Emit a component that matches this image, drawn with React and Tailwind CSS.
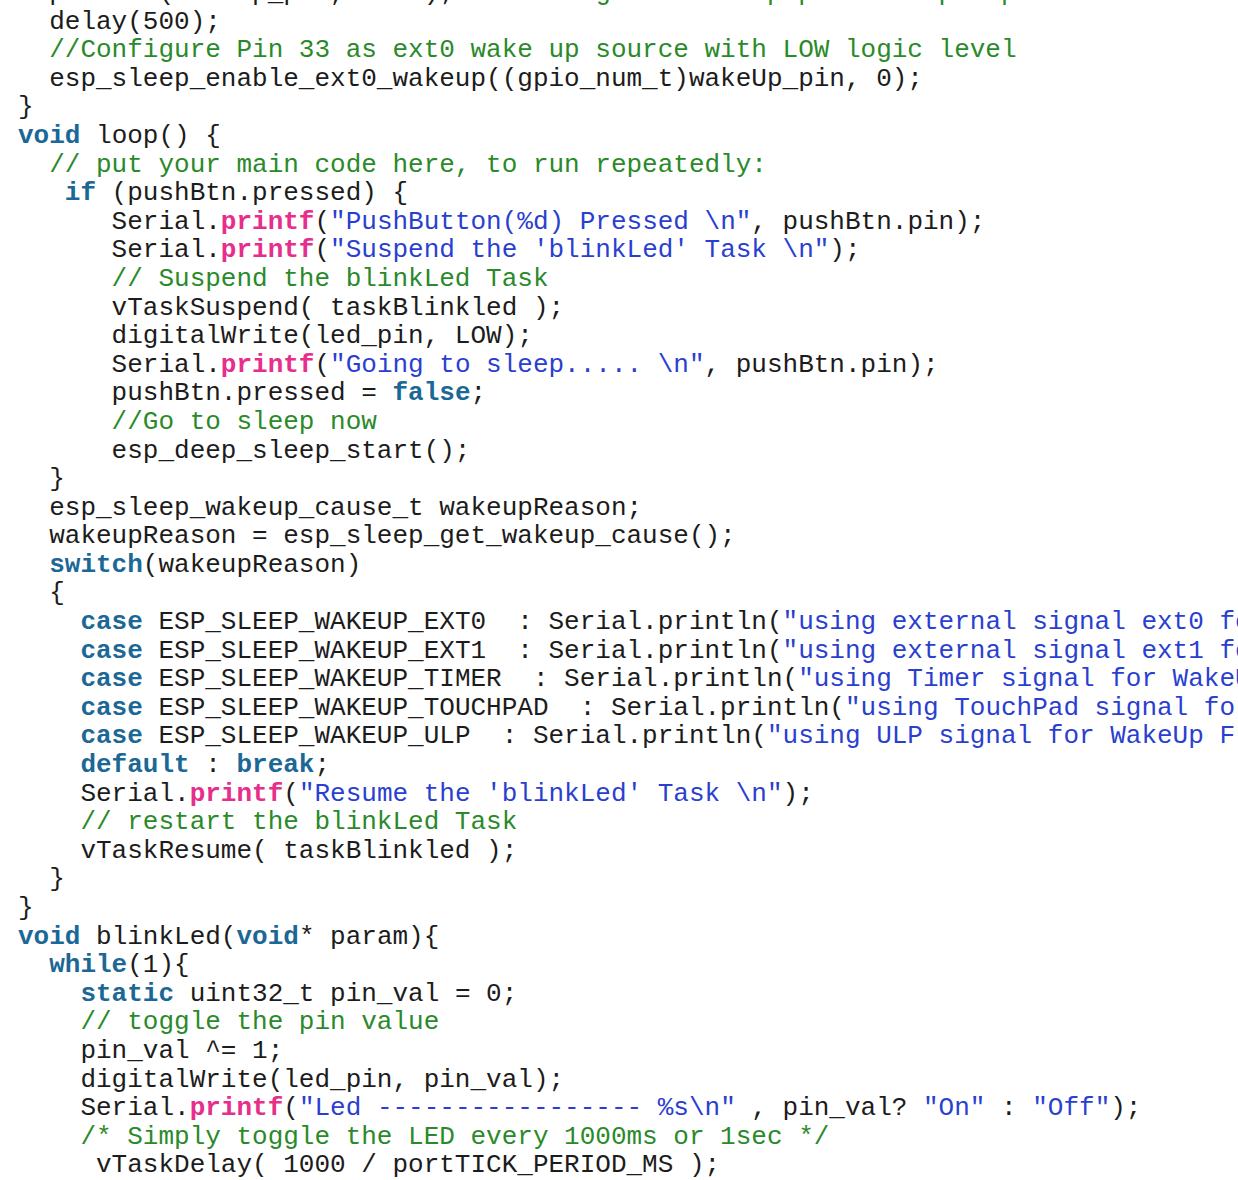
import React from "react";

const colors = {
  t: "text-[#1c1c1c]",
  k: "text-[#1b6896] font-bold",
  p: "text-[#e62e8b] font-bold",
  s: "text-[#2a3fd0]",
  c: "text-[#2a8a2a]",
};

// each line: list of [kind, text]
const lines = [
  [["t", "  pinMode(wakeUp_pin,INPUT); "], ["c", "// Configure wake up pin as input pin"]],
  [["t", "  delay(500);"]],
  [["c", "  //Configure Pin 33 as ext0 wake up source with LOW logic level"]],
  [["t", "  esp_sleep_enable_ext0_wakeup((gpio_num_t)wakeUp_pin, 0);"]],
  [["t", "}"]],
  [["k", "void"], ["t", " loop() {"]],
  [["c", "  // put your main code here, to run repeatedly:"]],
  [["k", "   if"], ["t", " (pushBtn.pressed) {"]],
  [["t", "      Serial."], ["p", "printf"], ["t", "("], ["s", "\"PushButton(%d) Pressed \\n\""], ["t", ", pushBtn.pin);"]],
  [["t", "      Serial."], ["p", "printf"], ["t", "("], ["s", "\"Suspend the 'blinkLed' Task \\n\""], ["t", ");"]],
  [["c", "      // Suspend the blinkLed Task"]],
  [["t", "      vTaskSuspend( taskBlinkled );"]],
  [["t", "      digitalWrite(led_pin, LOW);"]],
  [["t", "      Serial."], ["p", "printf"], ["t", "("], ["s", "\"Going to sleep..... \\n\""], ["t", ", pushBtn.pin);"]],
  [["t", "      pushBtn.pressed = "], ["k", "false"], ["t", ";"]],
  [["c", "      //Go to sleep now"]],
  [["t", "      esp_deep_sleep_start();"]],
  [["t", "  }"]],
  [["t", "  esp_sleep_wakeup_cause_t wakeupReason;"]],
  [["t", "  wakeupReason = esp_sleep_get_wakeup_cause();"]],
  [["k", "  switch"], ["t", "(wakeupReason)"]],
  [["t", "  {"]],
  [["k", "    case"], ["t", " ESP_SLEEP_WAKEUP_EXT0  : Serial.println("], ["s", "\"using external signal ext0 for WakeUp From sleep\""], ["t", "); "], ["k", "break"], ["t", ";"]],
  [["k", "    case"], ["t", " ESP_SLEEP_WAKEUP_EXT1  : Serial.println("], ["s", "\"using external signal ext1 for WakeUp From sleep\""], ["t", "); "], ["k", "break"], ["t", ";"]],
  [["k", "    case"], ["t", " ESP_SLEEP_WAKEUP_TIMER  : Serial.println("], ["s", "\"using Timer signal for WakeUp From sleep\""], ["t", "); "], ["k", "break"], ["t", ";"]],
  [["k", "    case"], ["t", " ESP_SLEEP_WAKEUP_TOUCHPAD  : Serial.println("], ["s", "\"using TouchPad signal for WakeUp From sleep\""], ["t", "); "], ["k", "break"], ["t", ";"]],
  [["k", "    case"], ["t", " ESP_SLEEP_WAKEUP_ULP  : Serial.println("], ["s", "\"using ULP signal for WakeUp From sleep\""], ["t", "); "], ["k", "break"], ["t", ";"]],
  [["k", "    default"], ["t", " : "], ["k", "break"], ["t", ";"]],
  [["t", "    Serial."], ["p", "printf"], ["t", "("], ["s", "\"Resume the 'blinkLed' Task \\n\""], ["t", ");"]],
  [["c", "    // restart the blinkLed Task"]],
  [["t", "    vTaskResume( taskBlinkled );"]],
  [["t", "  }"]],
  [["t", "}"]],
  [["k", "void"], ["t", " blinkLed("], ["k", "void"], ["t", "* param){"]],
  [["k", "  while"], ["t", "(1){"]],
  [["k", "    static"], ["t", " uint32_t pin_val = 0;"]],
  [["c", "    // toggle the pin value"]],
  [["t", "    pin_val ^= 1;"]],
  [["t", "    digitalWrite(led_pin, pin_val);"]],
  [["t", "    Serial."], ["p", "printf"], ["t", "("], ["s", "\"Led ----------------- %s\\n\""], ["t", " , pin_val? "], ["s", "\"On\""], ["t", " : "], ["s", "\"Off\""], ["t", ");"]],
  [["c", "    /* Simply toggle the LED every 1000ms or 1sec */"]],
  [["t", "     vTaskDelay( 1000 / portTICK_PERIOD_MS );"]],
];

const App = () => {
  return (
    <div className="w-[1238px] h-[1180px] overflow-hidden bg-white">
      <pre
        className="-mt-[21px] pl-[18px] text-[26px] leading-[28.6px] whitespace-pre"
        style={{ fontFamily: '"Liberation Mono", "Courier New", monospace' }}
      >
        {lines.map((line, i) => (
          <div key={i}>
            {line.map(([kind, text], j) => (
              <span key={j} className={colors[kind]}>
                {text}
              </span>
            ))}
          </div>
        ))}
      </pre>
    </div>
  );
};

export default App;
